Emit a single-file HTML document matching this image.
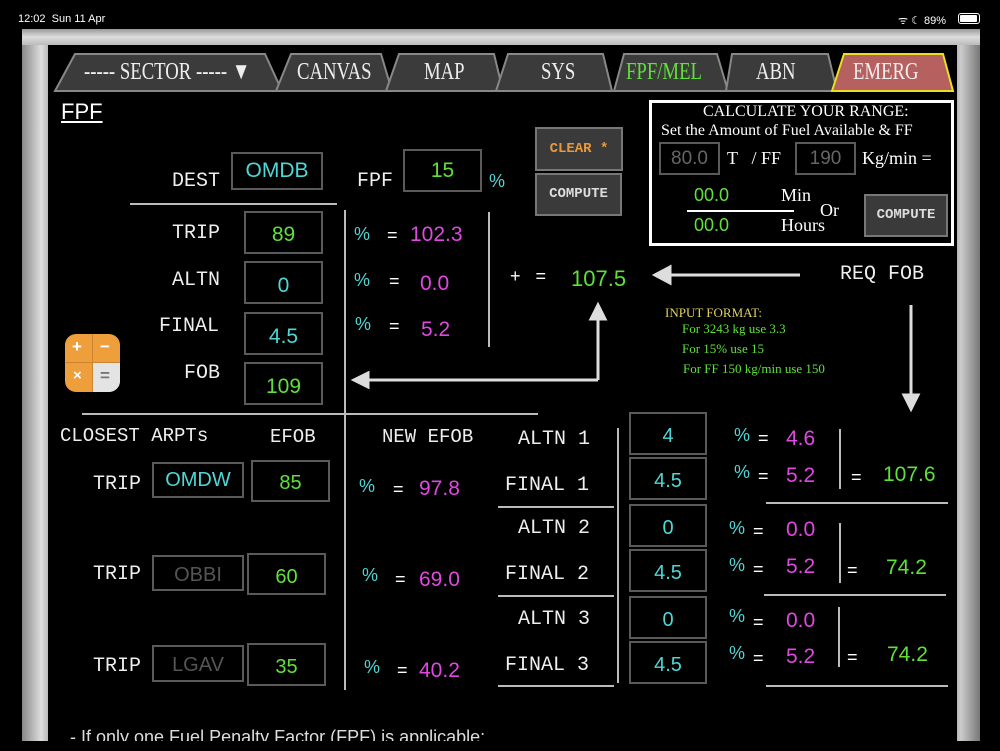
<!DOCTYPE html>
<html><head><meta charset="utf-8"><style>
*{margin:0;padding:0;box-sizing:border-box}
body{width:1000px;height:750px;background:#000;position:relative;overflow:hidden;font-family:"Liberation Sans",sans-serif;color:#fff}
.a{position:absolute;white-space:nowrap}
.m{font-family:"Liberation Mono",monospace;color:#eee}
.s{font-family:"Liberation Serif",serif}
.t{font-family:"Liberation Serif",serif;font-size:24px;transform:scaleX(0.78);transform-origin:0 0;color:#eee}
.box{position:absolute;border:2px solid #5a5a5a;background:#000;text-align:center;font-family:"Liberation Sans",sans-serif}
.g{color:#5fe03a}.c{color:#4fd6d6}.p{color:#e048e0}
.hl{position:absolute;height:2px;background:#bbb}
.vl{position:absolute;width:2px;background:#bbb}
.btn{position:absolute;background:#3a3a3a;border:2px solid #777;font-family:"Liberation Mono",monospace;font-weight:bold;text-align:center;font-size:14px;color:#ddd}
</style></head><body>
<div class="a" style="left:18px;top:13px;font-size:11px">12:02&nbsp;&nbsp;Sun 11 Apr</div>
<div class="a" style="left:898px;top:13px;font-size:11px">ᯤ ☾ 89%</div>
<div class="a" style="left:958px;top:13px;width:22px;height:11px;border:1px solid #fff;border-radius:3px;padding:1px"><div style="width:17px;height:7px;background:#fff;border-radius:1px"></div></div>
<!-- frame -->
<div class="a" style="left:22px;top:29px;width:958px;height:715px;background:linear-gradient(90deg,#888,#ddd 2%,#aaa 3%,#999 97%,#ccc 98%,#777)"></div>
<div class="a" style="left:22px;top:29px;width:958px;height:16px;background:linear-gradient(180deg,#999,#ddd,#bbb)"></div>
<div class="a" style="left:48px;top:45px;width:909px;height:700px;background:#000"></div>
<!-- tabs -->
<svg class="a" style="left:0;top:0" width="1000" height="100">
<g stroke="#888" stroke-width="2" fill="#3b3b3b">
<polygon points="55,91 75,54 265,54 282,91"/>
<polygon points="276,91 291,54 381,54 392,91"/>
<polygon points="386,91 399,54 494,54 503,91"/>
<polygon points="496,91 508,54 603,54 612,91"/>
<polygon points="614,91 624,54 717,54 728,91"/>
<polygon points="726,91 732,54 828,54 837,91"/>
<polygon points="832,91 844,54 943,54 953,91" fill="#b76060" stroke="#e8e020"/>
</g></svg>
<div class="a t" style="left:84px;top:59px">----- SECTOR ----- ▼</div>
<div class="a t" style="left:297px;top:59px">CANVAS</div>
<div class="a t" style="left:424px;top:59px">MAP</div>
<div class="a t" style="left:541px;top:59px">SYS</div>
<div class="a t" style="left:626px;top:59px;color:#5fe03a">FPF/MEL</div>
<div class="a t" style="left:756px;top:59px">ABN</div>
<div class="a t" style="left:853px;top:59px">EMERG</div>
<div class="a" style="left:61px;top:99px;font-size:22px;text-decoration:underline">FPF</div>
<!-- top left -->
<div class="a m" style="left:172px;top:170px;font-size:20px">DEST</div>
<div class="box s c" style="left:231px;top:152px;width:92px;height:38px;font-size:21px;line-height:34px">OMDB</div>
<div class="a m" style="left:357px;top:170px;font-size:20px">FPF</div>
<div class="box g" style="left:403px;top:149px;width:79px;height:43px;font-size:21px;line-height:40px">15</div>
<div class="a c" style="left:489px;top:171px;font-size:18px">%</div>
<div class="hl" style="left:130px;top:203px;width:207px"></div>
<div class="a m" style="left:172px;top:222px;font-size:20px">TRIP</div>
<div class="a m" style="left:172px;top:269px;font-size:20px">ALTN</div>
<div class="a m" style="left:159px;top:315px;font-size:20px">FINAL</div>
<div class="a m" style="left:184px;top:362px;font-size:20px">FOB</div>
<div class="box g" style="left:244px;top:211px;width:79px;height:43px;font-size:21px;line-height:44px">89</div>
<div class="box c" style="left:244px;top:261px;width:79px;height:43px;font-size:21px;line-height:46px">0</div>
<div class="box c" style="left:244px;top:312px;width:79px;height:43px;font-size:21px;line-height:46px">4.5</div>
<div class="box g" style="left:244px;top:362px;width:79px;height:43px;font-size:21px;line-height:46px">109</div>
<div class="vl" style="left:344px;top:210px;height:480px"></div>
<div class="vl" style="left:488px;top:212px;height:135px"></div>
<div class="a c" style="left:354px;top:224px;font-size:18px">%</div>
<div class="a c" style="left:354px;top:270px;font-size:18px">%</div>
<div class="a c" style="left:355px;top:314px;font-size:18px">%</div>
<div class="a" style="left:387px;top:225px;font-size:18px">=</div>
<div class="a" style="left:389px;top:271px;font-size:18px">=</div>
<div class="a" style="left:389px;top:316px;font-size:18px">=</div>
<div class="a p" style="left:410px;top:223px;font-size:21px">102.3</div>
<div class="a p" style="left:420px;top:272px;font-size:21px">0.0</div>
<div class="a p" style="left:421px;top:318px;font-size:21px">5.2</div>
<div class="a" style="left:510px;top:266px;font-size:18px">+&nbsp;&nbsp;&nbsp;=</div>
<div class="a g" style="left:571px;top:266px;font-size:22px">107.5</div>
<!-- calculator -->
<div class="a" style="left:65px;top:334px;width:55px;height:58px;border-radius:11px;overflow:hidden;background:#ee9e3a">
<div class="a" style="left:28px;top:29px;width:27px;height:29px;background:#e4e4e4"></div>
<div class="a" style="left:27px;top:0;width:1px;height:58px;background:#c98530"></div>
<div class="a" style="left:0;top:28px;width:55px;height:1px;background:#c98530"></div>
<div class="a" style="left:7px;top:3px;font-size:17px;font-weight:bold">+</div>
<div class="a" style="left:35px;top:3px;font-size:17px;font-weight:bold">−</div>
<div class="a" style="left:8px;top:33px;font-size:15px;font-weight:bold">×</div>
<div class="a" style="left:35px;top:32px;font-size:17px;font-weight:bold;color:#777">=</div>
</div>
<!-- arrows -->
<svg class="a" style="left:0;top:0" width="1000" height="750">
<g stroke="#ddd" stroke-width="3" fill="#ddd">
<line x1="668" y1="275" x2="800" y2="275"/><polygon points="655,275 670,267 670,283"/>
<line x1="598" y1="318" x2="598" y2="380"/><line x1="598" y1="380" x2="368" y2="380"/>
<polygon points="598,305 591,319 605,319"/><polygon points="354,380 368,373 368,387"/>
<line x1="911" y1="305" x2="911" y2="396"/><polygon points="911,409 904,395 918,395"/>
</g></svg>
<div class="btn" style="left:535px;top:127px;width:88px;height:44px;line-height:40px;color:#e89a3a">CLEAR <span>*</span></div>
<div class="btn" style="left:535px;top:173px;width:87px;height:43px;line-height:39px">COMPUTE</div>
<!-- range -->
<div class="a" style="left:649px;top:100px;width:305px;height:146px;border:3px solid #fff"></div>
<div class="a s" style="left:703px;top:103px;font-size:16px">CALCULATE YOUR RANGE:</div>
<div class="a s" style="left:661px;top:122px;font-size:16px">Set the Amount of Fuel Available &amp; FF</div>
<div class="box s" style="left:659px;top:142px;width:61px;height:33px;font-size:19px;line-height:30px;color:#666">80.0</div>
<div class="a s" style="left:727px;top:148px;font-size:18px">T&nbsp;&nbsp;&nbsp;/ FF</div>
<div class="box s" style="left:795px;top:142px;width:61px;height:33px;font-size:19px;line-height:30px;color:#666">190</div>
<div class="a s" style="left:862px;top:148px;font-size:18px">Kg/min =</div>
<div class="a g" style="left:694px;top:185px;font-size:18px">00.0</div>
<div class="a s" style="left:781px;top:185px;font-size:18px">Min</div>
<div class="hl" style="left:687px;top:210px;width:107px;background:#fff"></div>
<div class="a s" style="left:820px;top:200px;font-size:18px">Or</div>
<div class="a g" style="left:694px;top:215px;font-size:18px">00.0</div>
<div class="a s" style="left:781px;top:215px;font-size:18px">Hours</div>
<div class="btn" style="left:864px;top:194px;width:84px;height:43px;line-height:39px">COMPUTE</div>
<div class="a m" style="left:840px;top:263px;font-size:20px">REQ FOB</div>
<div class="a s" style="left:665px;top:305px;font-size:13px;color:#e0d060">INPUT FORMAT:</div>
<div class="a s g" style="left:682px;top:321px;font-size:13px">For 3243 kg use 3.3</div>
<div class="a s g" style="left:682px;top:341px;font-size:13px">For 15% use 15</div>
<div class="a s g" style="left:683px;top:361px;font-size:13px">For FF 150 kg/min use 150</div>
<!-- bottom left -->
<div class="hl" style="left:82px;top:413px;width:456px"></div>
<div class="a m" style="left:60px;top:425px;font-size:19px">CLOSEST ARPTs</div>
<div class="a m" style="left:270px;top:426px;font-size:19px">EFOB</div>
<div class="a m" style="left:382px;top:426px;font-size:19px">NEW EFOB</div>
<div class="a m" style="left:93px;top:473px;font-size:20px">TRIP</div>
<div class="a m" style="left:93px;top:563px;font-size:20px">TRIP</div>
<div class="a m" style="left:93px;top:655px;font-size:20px">TRIP</div>
<div class="box s c" style="left:152px;top:462px;width:92px;height:36px;font-size:20px;line-height:32px">OMDW</div>
<div class="box s" style="left:152px;top:555px;width:92px;height:36px;font-size:20px;line-height:36px;color:#555">OBBI</div>
<div class="box s" style="left:152px;top:645px;width:92px;height:37px;font-size:20px;line-height:36px;color:#555">LGAV</div>
<div class="box g" style="left:251px;top:460px;width:79px;height:42px;font-size:20px;line-height:42px">85</div>
<div class="box g" style="left:247px;top:553px;width:79px;height:42px;font-size:20px;line-height:44px">60</div>
<div class="box g" style="left:247px;top:643px;width:79px;height:43px;font-size:20px;line-height:44px">35</div>
<div class="a c" style="left:359px;top:476px;font-size:18px">%</div>
<div class="a c" style="left:362px;top:565px;font-size:18px">%</div>
<div class="a c" style="left:364px;top:657px;font-size:18px">%</div>
<div class="a" style="left:393px;top:479px;font-size:18px">=</div>
<div class="a" style="left:395px;top:569px;font-size:18px">=</div>
<div class="a" style="left:397px;top:660px;font-size:18px">=</div>
<div class="a p" style="left:419px;top:477px;font-size:21px">97.8</div>
<div class="a p" style="left:419px;top:568px;font-size:21px">69.0</div>
<div class="a p" style="left:419px;top:659px;font-size:21px">40.2</div>
<!-- bottom right -->
<div class="hl" style="left:490px;top:413px;width:48px"></div>
<div class="a m" style="left:518px;top:428px;font-size:20px">ALTN 1</div>
<div class="a m" style="left:505px;top:474px;font-size:20px">FINAL 1</div>
<div class="a m" style="left:518px;top:517px;font-size:20px">ALTN 2</div>
<div class="a m" style="left:505px;top:563px;font-size:20px">FINAL 2</div>
<div class="a m" style="left:518px;top:608px;font-size:20px">ALTN 3</div>
<div class="a m" style="left:505px;top:654px;font-size:20px">FINAL 3</div>
<div class="hl" style="left:498px;top:506px;width:116px"></div>
<div class="hl" style="left:498px;top:595px;width:116px"></div>
<div class="hl" style="left:498px;top:685px;width:116px"></div>
<div class="vl" style="left:617px;top:428px;height:255px"></div>
<div class="box c" style="left:629px;top:412px;width:78px;height:43px;font-size:20px;line-height:44px">4</div>
<div class="box c" style="left:629px;top:457px;width:78px;height:43px;font-size:20px;line-height:44px">4.5</div>
<div class="box c" style="left:629px;top:504px;width:78px;height:43px;font-size:20px;line-height:44px">0</div>
<div class="box c" style="left:629px;top:549px;width:78px;height:43px;font-size:20px;line-height:44px">4.5</div>
<div class="box c" style="left:629px;top:596px;width:78px;height:43px;font-size:20px;line-height:44px">0</div>
<div class="box c" style="left:629px;top:641px;width:78px;height:43px;font-size:20px;line-height:44px">4.5</div>
<div class="a c" style="left:734px;top:425px;font-size:18px">%</div>
<div class="a c" style="left:734px;top:462px;font-size:18px">%</div>
<div class="a c" style="left:729px;top:518px;font-size:18px">%</div>
<div class="a c" style="left:729px;top:555px;font-size:18px">%</div>
<div class="a c" style="left:729px;top:606px;font-size:18px">%</div>
<div class="a c" style="left:729px;top:643px;font-size:18px">%</div>
<div class="a" style="left:758px;top:428px;font-size:18px">=</div>
<div class="a" style="left:758px;top:466px;font-size:18px">=</div>
<div class="a" style="left:753px;top:521px;font-size:18px">=</div>
<div class="a" style="left:753px;top:559px;font-size:18px">=</div>
<div class="a" style="left:753px;top:612px;font-size:18px">=</div>
<div class="a" style="left:753px;top:648px;font-size:18px">=</div>
<div class="a p" style="left:786px;top:427px;font-size:21px">4.6</div>
<div class="a p" style="left:786px;top:464px;font-size:21px">5.2</div>
<div class="a p" style="left:786px;top:518px;font-size:21px">0.0</div>
<div class="a p" style="left:786px;top:555px;font-size:21px">5.2</div>
<div class="a p" style="left:786px;top:609px;font-size:21px">0.0</div>
<div class="a p" style="left:786px;top:645px;font-size:21px">5.2</div>
<div class="vl" style="left:839px;top:429px;height:60px"></div>
<div class="vl" style="left:839px;top:523px;height:60px"></div>
<div class="vl" style="left:838px;top:607px;height:60px"></div>
<div class="a" style="left:851px;top:467px;font-size:18px">=</div>
<div class="a" style="left:847px;top:560px;font-size:18px">=</div>
<div class="a" style="left:847px;top:647px;font-size:18px">=</div>
<div class="a g" style="left:883px;top:463px;font-size:21px">107.6</div>
<div class="a g" style="left:886px;top:556px;font-size:21px">74.2</div>
<div class="a g" style="left:887px;top:643px;font-size:21px">74.2</div>
<div class="hl" style="left:766px;top:502px;width:182px"></div>
<div class="hl" style="left:764px;top:594px;width:182px"></div>
<div class="hl" style="left:766px;top:685px;width:182px"></div>
<div class="a" style="left:70px;top:727px;font-size:18px;color:#ddd">- If only one Fuel Penalty Factor (FPF) is applicable:</div>
<div class="a" style="left:0;top:741px;width:1000px;height:10px;background:#000"></div>
</body></html>
